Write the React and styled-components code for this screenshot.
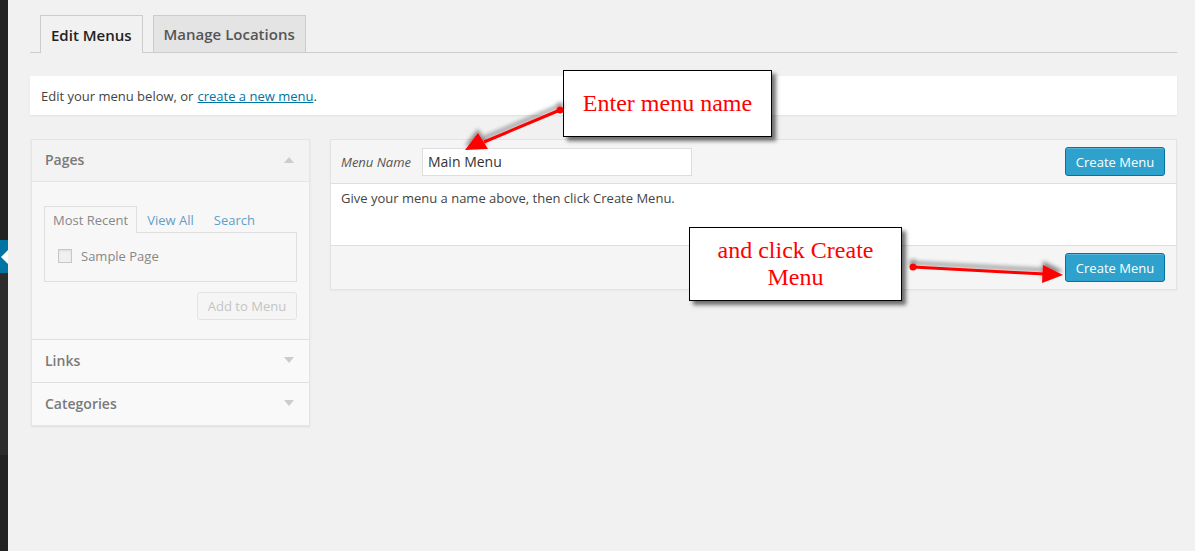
import React from 'react';
import styled, { createGlobalStyle } from 'styled-components';

const GlobalStyle = createGlobalStyle`
  html, body {
    margin: 0;
    padding: 0;
    background: #f1f1f1;
    font-family: "Open Sans", "Liberation Sans", sans-serif;
    font-size: 13px;
    color: #444;
  }
`;

const App = () => {
  return (
    <Page>
      <GlobalStyle />
      <AdminStrip>
        <StripTop />
        <StripCurrent>
          <svg width="8" height="14" viewBox="0 0 8 14">
            <path d="M8 0 L1 7 L8 14 Z" fill="#fff" />
          </svg>
        </StripCurrent>
        <StripSub />
        <StripBottom />
      </AdminStrip>

      <Main>
        <TabBar>
          <NavTab $active>Edit Menus</NavTab>
          <NavTab>Manage Locations</NavTab>
        </TabBar>

        <Notice>
          Edit your menu below, or <NoticeLink href="#">create a new menu</NoticeLink>.
        </Notice>

        <Columns>
          <Sidebar>
            <Section>
              <SectionHeader $open>
                Pages
                <Caret $up />
              </SectionHeader>
              <SectionBody>
                <InnerTabs>
                  <InnerTab $active>Most Recent</InnerTab>
                  <InnerTab>View All</InnerTab>
                  <InnerTab>Search</InnerTab>
                </InnerTabs>
                <TabPanel>
                  <CheckRow>
                    <Check />
                    Sample Page
                  </CheckRow>
                </TabPanel>
                <SidebarActions>
                  <GhostButton>Add to Menu</GhostButton>
                </SidebarActions>
              </SectionBody>
            </Section>
            <Section>
              <SectionHeader>
                Links
                <Caret />
              </SectionHeader>
            </Section>
            <Section>
              <SectionHeader>
                Categories
                <Caret />
              </SectionHeader>
            </Section>
          </Sidebar>

          <MenuPanel>
            <PanelBar>
              <NameLabel>Menu Name</NameLabel>
              <NameInput defaultValue="Main Menu" />
              <Spacer />
              <PrimaryButton>Create Menu</PrimaryButton>
            </PanelBar>
            <PanelBody>Give your menu a name above, then click Create Menu.</PanelBody>
            <PanelFooter>
              <PrimaryButton>Create Menu</PrimaryButton>
            </PanelFooter>
          </MenuPanel>
        </Columns>
      </Main>

      <Callout $left={563} $top={70} $width={209} $height={67}>
        Enter menu name
      </Callout>
      <Callout $left={689} $top={227} $width={213} $height={74}>
        and click Create<br />Menu
      </Callout>

      <ArrowLayer width="1195" height="551" viewBox="0 0 1195 551">
        <defs>
          <filter id="shade" x="-10%" y="-50%" width="120%" height="200%">
            <feGaussianBlur in="SourceAlpha" stdDeviation="2" />
            <feOffset dx="0" dy="-4" />
            <feComponentTransfer>
              <feFuncA type="linear" slope="0.45" />
            </feComponentTransfer>
            <feMerge>
              <feMergeNode />
              <feMergeNode in="SourceGraphic" />
            </feMerge>
          </filter>
        </defs>
        <g filter="url(#shade)">
          <line x1="560" y1="110" x2="484" y2="142" stroke="#ff0000" strokeWidth="3" />
          <circle cx="560" cy="110" r="3.5" fill="#ff0000" />
          <polygon points="465,150 478,133 488,149" fill="#ff0000" />
        </g>
        <g filter="url(#shade)">
          <line x1="913" y1="267" x2="1045" y2="274" stroke="#ff0000" strokeWidth="3" />
          <circle cx="913" cy="267" r="3.5" fill="#ff0000" />
          <polygon points="1063,275 1043,265 1042,283" fill="#ff0000" />
        </g>
      </ArrowLayer>
    </Page>
  );
};

export default App;

const Page = styled.div`
  position: relative;
  display: flex;
  min-height: 551px;
  overflow: hidden;
`;

const AdminStrip = styled.div`
  width: 8px;
  display: flex;
  flex-direction: column;
  background: #222;
`;

const StripTop = styled.div`
  height: 240px;
  background: #222;
`;

const StripCurrent = styled.div`
  height: 33px;
  background: #0074a2;
  display: flex;
  align-items: center;
  justify-content: flex-end;
`;

const StripSub = styled.div`
  height: 182px;
  background: #2c2c2c;
`;

const StripBottom = styled.div`
  flex: 1;
  background: #222;
`;

const Main = styled.div`
  flex: 1;
  padding: 15px 18px 0 22px;
`;

const TabBar = styled.div`
  display: flex;
  gap: 10px;
  padding-left: 10px;
  border-bottom: 1px solid #ccc;
  height: 37px;
`;

const NavTab = styled.div`
  display: flex;
  align-items: center;
  padding: 0 10px;
  border: 1px solid #ccc;
  border-bottom: none;
  background: ${(p) => (p.$active ? '#f1f1f1' : '#e4e4e4')};
  color: ${(p) => (p.$active ? '#222' : '#555')};
  font-size: 15px;
  font-weight: 600;
  margin-bottom: ${(p) => (p.$active ? '-1px' : '0')};
  height: ${(p) => (p.$active ? '37px' : '36px')};
`;

const Notice = styled.div`
  margin-top: 23px;
  height: 39px;
  display: flex;
  align-items: center;
  padding: 0 11px;
  background: #fff;
  box-shadow: 0 1px 2px rgba(0, 0, 0, 0.07);
  color: #444;
`;

const NoticeLink = styled.a`
  color: #0074a2;
  text-decoration: underline;
  margin-left: 4px;
`;

const Columns = styled.div`
  display: flex;
  align-items: flex-start;
  gap: 20px;
  margin-top: 24px;
`;

const Sidebar = styled.div`
  width: 277px;
  margin-left: 1px;
  border: 1px solid #e5e5e5;
  background: #f9f9f9;
  box-shadow: 0 1px 2px rgba(0, 0, 0, 0.08);
`;

const Section = styled.div`
  & + & {
    border-top: 1px solid #dfdfdf;
  }
`;

const SectionHeader = styled.div`
  height: 42px;
  display: flex;
  align-items: center;
  justify-content: space-between;
  padding: 0 14px 0 13px;
  font-size: 14px;
  font-weight: 600;
  color: #7a7a7a;
  background: ${(p) => (p.$open ? '#f3f3f3' : '#f9f9f9')};
  border-bottom: ${(p) => (p.$open ? '1px solid #e5e5e5' : 'none')};
  padding-bottom: 2px;
  box-sizing: border-box;
`;

const Caret = styled.span`
  width: 0;
  height: 0;
  border-left: 5px solid transparent;
  border-right: 5px solid transparent;
  ${(p) =>
    p.$up
      ? 'border-bottom: 6px solid #ccc;'
      : 'border-top: 6px solid #ccc;'}
  margin-right: 1px;
`;

const SectionBody = styled.div`
  padding: 24px 12px 19px 12px;
  background: #f7f7f7;
`;

const InnerTabs = styled.div`
  display: flex;
  align-items: flex-end;
  height: 26px;
`;

const InnerTab = styled.div`
  display: flex;
  align-items: center;
  padding: 0 ${(p) => (p.$active ? '8px' : '9px')};
  border: ${(p) => (p.$active ? '1px solid #dfdfdf' : '1px solid transparent')};
  border-bottom: none;
  background: ${(p) => (p.$active ? '#f7f7f7' : 'transparent')};
  color: ${(p) => (p.$active ? '#888' : '#5f9fc7')};
  margin-bottom: -1px;
  position: relative;
  z-index: 1;
  height: 26px;
`;

const TabPanel = styled.div`
  height: 48px;
  border: 1px solid #dfdfdf;
  background: #f7f7f7;
  display: flex;
  align-items: center;
  padding: 0 13px;
`;

const CheckRow = styled.label`
  display: flex;
  align-items: center;
  gap: 9px;
  color: #888;
  margin-top: -2px;
`;

const Check = styled.span`
  width: 12px;
  height: 12px;
  border: 1px solid #c8c8c8;
  background: #f0f0f0;
  box-shadow: inset 0 1px 2px rgba(0, 0, 0, 0.08);
`;

const SidebarActions = styled.div`
  display: flex;
  justify-content: flex-end;
  margin-top: 10px;
`;

const GhostButton = styled.div`
  width: 98px;
  height: 26px;
  display: flex;
  align-items: center;
  justify-content: center;
  border: 1px solid #e3e3e3;
  border-radius: 3px;
  background: #f5f5f5;
  color: #c4c4c4;
`;

const MenuPanel = styled.div`
  flex: 1;
  border: 1px solid #e3e3e3;
  background: #f5f5f5;
  box-shadow: 0 1px 2px rgba(0, 0, 0, 0.04);
`;

const PanelBar = styled.div`
  height: 43px;
  display: flex;
  align-items: center;
  padding: 0 11px 0 10px;
  border-bottom: 1px solid #dfdfdf;
`;

const NameLabel = styled.span`
  font-style: italic;
  color: #555;
  width: 81px;
`;

const NameInput = styled.input`
  width: 270px;
  height: 28px;
  box-sizing: border-box;
  border: 1px solid #ddd;
  background: #fff;
  padding: 0 5px;
  font-family: "Open Sans", "Liberation Sans", sans-serif;
  font-size: 14px;
  color: #333;
  outline: none;
`;

const Spacer = styled.div`
  flex: 1;
`;

const PrimaryButton = styled.div`
  width: 98px;
  height: 27px;
  display: flex;
  align-items: center;
  justify-content: center;
  background: #2ea2cc;
  border: 1px solid #0074a2;
  border-radius: 3px;
  box-shadow: inset 0 1px 0 rgba(120, 200, 230, 0.5);
  color: #fff;
`;

const PanelBody = styled.div`
  height: 62px;
  box-sizing: border-box;
  padding: 5px 10px;
  background: #fff;
  border-bottom: 1px solid #dfdfdf;
  color: #444;
`;

const PanelFooter = styled.div`
  height: 43px;
  display: flex;
  align-items: center;
  justify-content: flex-end;
  padding: 0 11px;
`;

const Callout = styled.div`
  position: absolute;
  left: ${(p) => p.$left}px;
  top: ${(p) => p.$top}px;
  width: ${(p) => p.$width}px;
  height: ${(p) => p.$height}px;
  box-sizing: border-box;
  border: 1px solid #000;
  background: #fff;
  box-shadow: 4px 4px 4px rgba(0, 0, 0, 0.55);
  display: flex;
  align-items: center;
  justify-content: center;
  text-align: center;
  font-family: "Liberation Serif", "Times New Roman", serif;
  font-size: 24px;
  line-height: 27px;
  color: #ff0000;
`;

const ArrowLayer = styled.svg`
  position: absolute;
  left: 0;
  top: 0;
  pointer-events: none;
`;
